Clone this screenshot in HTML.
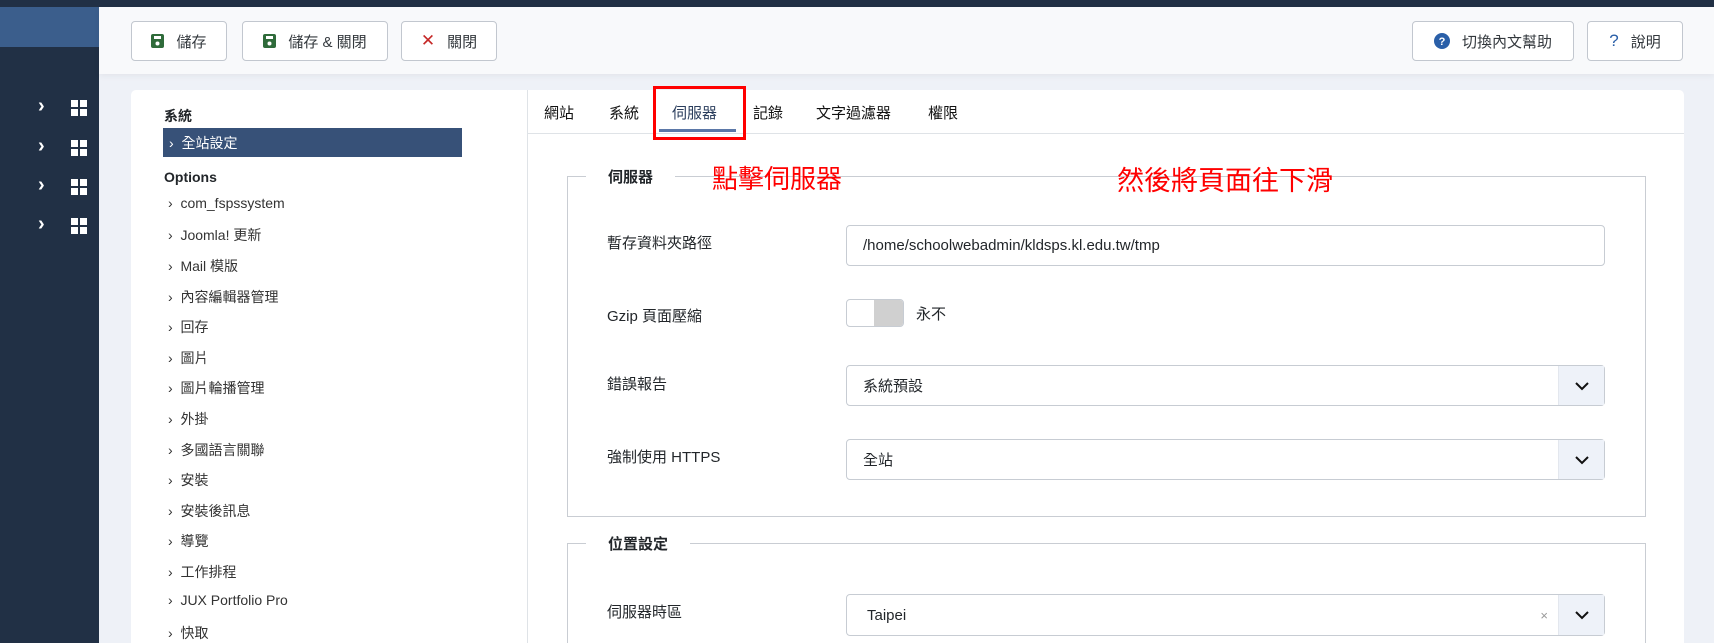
<!DOCTYPE html>
<html style="width:1714px;height:643px;overflow:hidden"><head><meta charset="utf-8"><style>
*{box-sizing:border-box;margin:0;padding:0}
body{width:1714px;height:643px;overflow:hidden;background:#eef1f7;font-family:"Liberation Sans","Noto Sans CJK TC",sans-serif;color:#22262a;position:relative;font-size:15px}
.a{position:absolute}
.top{left:0;top:0;width:1714px;height:7px;background:#213045}
.side{left:0;top:7px;width:99px;height:636px;background:#213045}
.sblue{left:0;top:7px;width:99px;height:40px;background:#3b5e8c}
.chev{color:#fff;font-size:20px;font-weight:bold;left:38px}
.grid{left:71px;width:16px;height:16px;display:grid;grid-template-columns:7px 7px;gap:2px}
.grid i{background:#fff;display:block}
.tb{left:99px;top:7px;width:1615px;height:67px;background:#f8f9fb;box-shadow:0 2px 6px rgba(0,0,0,.05)}
.btn{top:21px;height:40px;border:1px solid #c2c7cf;border-radius:4px;background:#fff;display:flex;align-items:center;justify-content:center;gap:12px;font-size:15px;color:#33383d}
.card{left:131px;top:90px;width:1553px;height:553px;background:#fff;border-radius:5px 5px 0 0}
.div{left:527px;top:90px;width:1px;height:553px;background:#dfe3e7}
.tabs{left:528px;top:133px;width:1156px;height:1px;background:#dfe3e7}
.tab{top:102px;font-size:15px;color:#111}
.fs{border:1px solid #c9cdd3}
.lg{background:#fff;padding:0 22px;font-weight:bold;font-size:15px}
.lbl{left:607px;font-size:15px}
.inp{left:846px;width:759px;border:1px solid #c7ccd3;border-radius:4px;background:#fff;display:flex;align-items:center;padding-left:16px;font-size:15px}
.sel .ar{position:absolute;right:0;top:0;bottom:0;width:46px;background:#eef2f9;border-left:1px solid #e3e7ee;display:flex;align-items:center;justify-content:center}
.li{left:168px;font-size:14px;color:#333}
.red{color:#f00;font-size:26px}
</style></head><body>
<div class="a top"></div><div class="a side"></div><div class="a sblue"></div>
<div class="a chev" style="top:95px">›</div><div class="a grid" style="top:100px"><i></i><i></i><i></i><i></i></div>
<div class="a chev" style="top:135px">›</div><div class="a grid" style="top:140px"><i></i><i></i><i></i><i></i></div>
<div class="a chev" style="top:174px">›</div><div class="a grid" style="top:179px"><i></i><i></i><i></i><i></i></div>
<div class="a chev" style="top:213px">›</div><div class="a grid" style="top:218px"><i></i><i></i><i></i><i></i></div>
<div class="a tb"></div>
<div class="a btn" style="left:131px;width:96px"><svg width="13" height="14"><rect x="0" y="0" width="13" height="14" rx="2" fill="#2f6b3a"/><rect x="3" y="2" width="7" height="3" fill="#fff"/><circle cx="6.5" cy="9.5" r="2" fill="#fff"/></svg>儲存</div>
<div class="a btn" style="left:242px;width:146px"><svg width="13" height="14"><rect x="0" y="0" width="13" height="14" rx="2" fill="#2f6b3a"/><rect x="3" y="2" width="7" height="3" fill="#fff"/><circle cx="6.5" cy="9.5" r="2" fill="#fff"/></svg>儲存 &amp; 關閉</div>
<div class="a btn" style="left:401px;width:96px"><span style="color:#c52827;font-size:17px">✕</span>關閉</div>
<div class="a btn" style="left:1412px;width:162px"><svg width="16" height="16"><circle cx="8" cy="8" r="8" fill="#2a5fa8"/><text x="8" y="12" font-size="11" font-weight="bold" fill="#fff" text-anchor="middle" font-family="Liberation Sans">?</text></svg>切換內文幫助</div>
<div class="a btn" style="left:1587px;width:96px"><span style="color:#2a5fa8;font-size:17px">?</span>說明</div>
<div class="a card"></div><div class="a div"></div><div class="a tabs"></div>
<div class="a" style="left:164px;top:106px;font-weight:bold;font-size:14px">系統</div>
<div class="a" style="left:163px;top:128px;width:299px;height:29px;background:#375178;color:#fff;font-size:14px;padding:5px 0 0 6px">›&nbsp; 全站設定</div>
<div class="a" style="left:164px;top:169px;font-weight:bold;font-size:14px">Options</div>
<div class="a li" style="top:195px">›&nbsp; com_fspssystem</div>
<div class="a li" style="top:225px">›&nbsp; Joomla! 更新</div>
<div class="a li" style="top:256px">›&nbsp; Mail 模版</div>
<div class="a li" style="top:287px">›&nbsp; 內容編輯器管理</div>
<div class="a li" style="top:317px">›&nbsp; 回存</div>
<div class="a li" style="top:348px">›&nbsp; 圖片</div>
<div class="a li" style="top:378px">›&nbsp; 圖片輪播管理</div>
<div class="a li" style="top:409px">›&nbsp; 外掛</div>
<div class="a li" style="top:440px">›&nbsp; 多國語言關聯</div>
<div class="a li" style="top:470px">›&nbsp; 安裝</div>
<div class="a li" style="top:501px">›&nbsp; 安裝後訊息</div>
<div class="a li" style="top:531px">›&nbsp; 導覽</div>
<div class="a li" style="top:562px">›&nbsp; 工作排程</div>
<div class="a li" style="top:592px">›&nbsp; JUX Portfolio Pro</div>
<div class="a li" style="top:623px">›&nbsp; 快取</div>
<div class="a tab" style="left:544px">網站</div>
<div class="a tab" style="left:609px">系統</div>
<div class="a tab" style="left:672px;color:#2a3d5c">伺服器</div>
<div class="a tab" style="left:753px">記錄</div>
<div class="a tab" style="left:816px">文字過濾器</div>
<div class="a tab" style="left:928px">權限</div>
<div class="a" style="left:659px;top:129px;width:77px;height:3px;background:#5b78a8"></div>
<div class="a" style="left:653px;top:86px;width:93px;height:54px;border:3px solid #f00"></div>
<div class="a fs" style="left:567px;top:176px;width:1079px;height:341px"></div>
<div class="a lg" style="left:586px;top:166px">伺服器</div>
<div class="a red" style="left:712px;top:159px">點擊伺服器</div>
<div class="a red" style="left:1117px;top:159px;font-size:27px">然後將頁面往下滑</div>
<div class="a lbl" style="top:232px">暫存資料夾路徑</div>
<div class="a inp" style="top:225px;height:41px">/home/schoolwebadmin/kldsps.kl.edu.tw/tmp</div>
<div class="a lbl" style="top:305px">Gzip 頁面壓縮</div>
<div class="a" style="left:846px;top:299px;width:58px;height:28px;border:1px solid #c7ccd3;border-radius:4px;overflow:hidden"><div style="position:absolute;right:0;top:0;width:29px;height:100%;background:#d0d0d0"></div></div>
<div class="a" style="left:916px;top:303px">永不</div>
<div class="a lbl" style="top:373px">錯誤報告</div>
<div class="a inp sel" style="top:365px;height:41px">系統預設<div class="ar"><svg width="16" height="10"><path d="M2 2l6 6 6-6" stroke="#111" stroke-width="2" fill="none"/></svg></div></div>
<div class="a lbl" style="top:446px">強制使用 HTTPS</div>
<div class="a inp sel" style="top:439px;height:41px">全站<div class="ar"><svg width="16" height="10"><path d="M2 2l6 6 6-6" stroke="#111" stroke-width="2" fill="none"/></svg></div></div>
<div class="a fs" style="left:567px;top:543px;width:1079px;height:100px;border-bottom:none"></div>
<div class="a lg" style="left:586px;top:533px">位置設定</div>
<div class="a lbl" style="top:601px">伺服器時區</div>
<div class="a inp sel" style="top:594px;height:42px;padding-left:20px">Taipei<span style="position:absolute;right:56px;color:#999;font-size:13px">×</span><div class="ar"><svg width="16" height="10"><path d="M2 2l6 6 6-6" stroke="#111" stroke-width="2" fill="none"/></svg></div></div>
</body></html>
